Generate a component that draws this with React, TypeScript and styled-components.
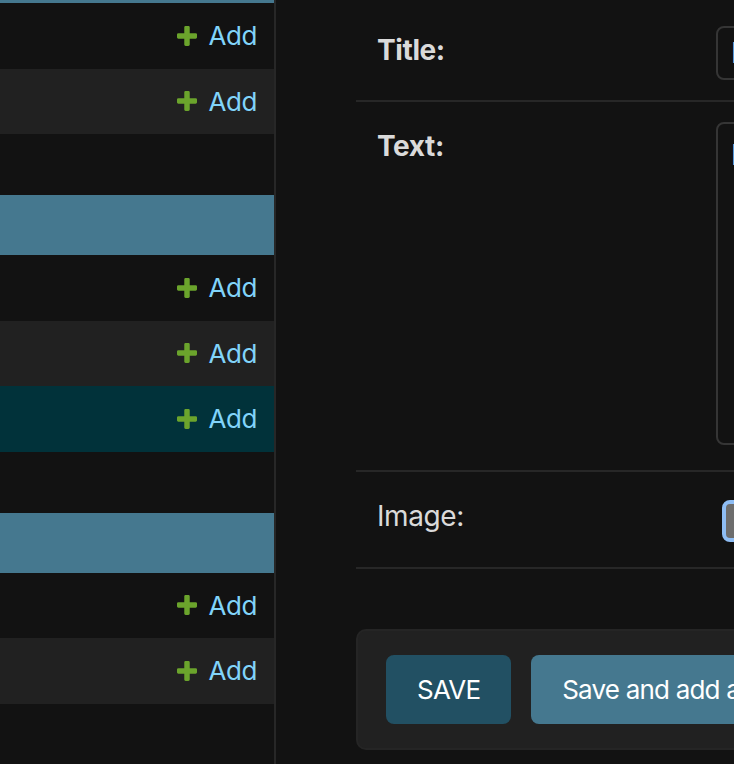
import styled, { createGlobalStyle } from "styled-components";

const GlobalStyle = createGlobalStyle`
  html, body {
    margin: 0;
    padding: 0;
    background: #121212;
  }
  body {
    font-family: Inter, "Noto Sans", "Liberation Sans", sans-serif;
    color: #eeeeee;
    overflow: hidden;
  }
`;

const Page = styled.div`
  display: flex;
  width: 734px;
  height: 764px;
  overflow: hidden;
  background: #121212;
`;

const Sidebar = styled.nav`
  flex: 0 0 274px;
  height: 100%;
  border-right: 2px solid #272727;
  overflow: hidden;
`;

const ModuleList = styled.div`
  margin-top: -57px;
`;

const Module = styled.div`
  margin-bottom: 61px;
`;

const Caption = styled.div`
  height: 60px;
  background: #45788f;
`;

type Tone = "plain" | "dark" | "current";

const toneBg: Record<Tone, string> = {
  plain: "#121212",
  dark: "#212121",
  current: "#01323a",
};

const ModelRow = styled.div<{ $tone: Tone }>`
  display: flex;
  align-items: center;
  justify-content: flex-end;
  height: 65.5px;
  padding-right: 17px;
  background: ${(p) => toneBg[p.$tone]};
`;

const AddLink = styled.a`
  display: flex;
  align-items: center;
  gap: 11px;
  color: #81d4fa;
  font-size: 26px;
  letter-spacing: -0.4px;
  text-decoration: none;
  cursor: pointer;
`;

const PlusIcon = () => (
  <svg width="20" height="20" viewBox="192 192 1408 1408" aria-hidden="true">
    <path
      fill="#6ba42c"
      d="M1600 796v192q0 40-28 68t-68 28h-416v416q0 40-28 68t-68 28h-192q-40 0-68-28t-28-68v-416h-416q-40 0-68-28t-28-68v-192q0-40 28-68t68-28h416v-416q0-40 28-68t68-28h192q40 0 68 28t28 68v416h416q40 0 68 28t28 68z"
    />
  </svg>
);

const Main = styled.main`
  flex: 1;
  min-width: 0;
  padding-left: 80px;
  overflow: hidden;
`;

const Form = styled.form`
  margin-top: 6px;
`;

const FormRow = styled.div`
  display: flex;
  align-items: flex-start;
  padding: 20px 0 20px 21px;
  border-bottom: 2px solid #272727;
`;

const Label = styled.label<{ $required?: boolean }>`
  flex: 0 0 339px;
  padding-top: 7px;
  font-size: 28px;
  letter-spacing: -0.4px;
  font-weight: ${(p) => (p.$required ? 700 : 400)};
  color: #dadada;
`;

const TextInput = styled.input`
  flex-shrink: 0;
  box-sizing: border-box;
  width: 600px;
  height: 54px;
  padding: 0 13px;
  border: 2px solid #353535;
  border-radius: 8px;
  background: #121212;
  color: #eeeeee;
  font-family: inherit;
  font-size: 28px;
  outline: none;
`;

const TextArea = styled.textarea`
  flex-shrink: 0;
  display: block;
  box-sizing: border-box;
  width: 600px;
  height: 323px;
  margin-bottom: 5px;
  padding: 14px 13px;
  border: 2px solid #353535;
  border-radius: 8px;
  background: #121212;
  color: #eeeeee;
  font-family: inherit;
  font-size: 28px;
  resize: none;
  outline: none;
`;

const FileField = styled.div`
  flex-shrink: 0;
  height: 55px;
  padding-left: 6px;
`;

const FileButton = styled.button`
  box-sizing: border-box;
  height: 42px;
  margin-top: 8px;
  padding: 0 16px;
  border: 4px solid #8ebdf4;
  border-radius: 8px;
  background: #6d6d6d;
  color: #ffffff;
  font-family: inherit;
  font-size: 26px;
  white-space: nowrap;
`;

const SubmitRow = styled.div`
  display: flex;
  gap: 20px;
  width: 700px;
  margin-top: 60px;
  padding: 24px 28px;
  border: 2px solid #252525;
  border-radius: 10px;
  background: #212121;
`;

const SubmitButton = styled.button<{ $default?: boolean }>`
  flex-shrink: 0;
  height: 69px;
  padding: 0 31px;
  border: none;
  border-radius: 8px;
  background: ${(p) => (p.$default ? "#225063" : "#45788f")};
  color: #ffffff;
  font-family: inherit;
  font-size: 26px;
  letter-spacing: -0.8px;
  white-space: nowrap;
  cursor: pointer;
`;

const modules: Tone[][] = [
  ["plain", "dark"],
  ["plain", "dark", "current"],
  ["plain", "dark"],
];

export default function App() {
  return (
    <>
      <GlobalStyle />
      <Page>
        <Sidebar>
          <ModuleList>
            {modules.map((rows, i) => (
              <Module key={i}>
                <Caption />
                {rows.map((tone, j) => (
                  <ModelRow key={j} $tone={tone}>
                    <AddLink>
                      <PlusIcon />
                      Add
                    </AddLink>
                  </ModelRow>
                ))}
              </Module>
            ))}
          </ModuleList>
        </Sidebar>
        <Main>
          <Form>
            <FormRow>
              <Label $required>Title:</Label>
              <TextInput defaultValue="Hello world" />
            </FormRow>
            <FormRow>
              <Label $required>Text:</Label>
              <TextArea defaultValue="Hello world" spellCheck={false} />
            </FormRow>
            <FormRow>
              <Label>Image:</Label>
              <FileField>
                <FileButton type="button">Choose File</FileButton>
              </FileField>
            </FormRow>
            <SubmitRow>
              <SubmitButton type="button" $default>
                SAVE
              </SubmitButton>
              <SubmitButton type="button">Save and add another</SubmitButton>
            </SubmitRow>
          </Form>
        </Main>
      </Page>
    </>
  );
}
